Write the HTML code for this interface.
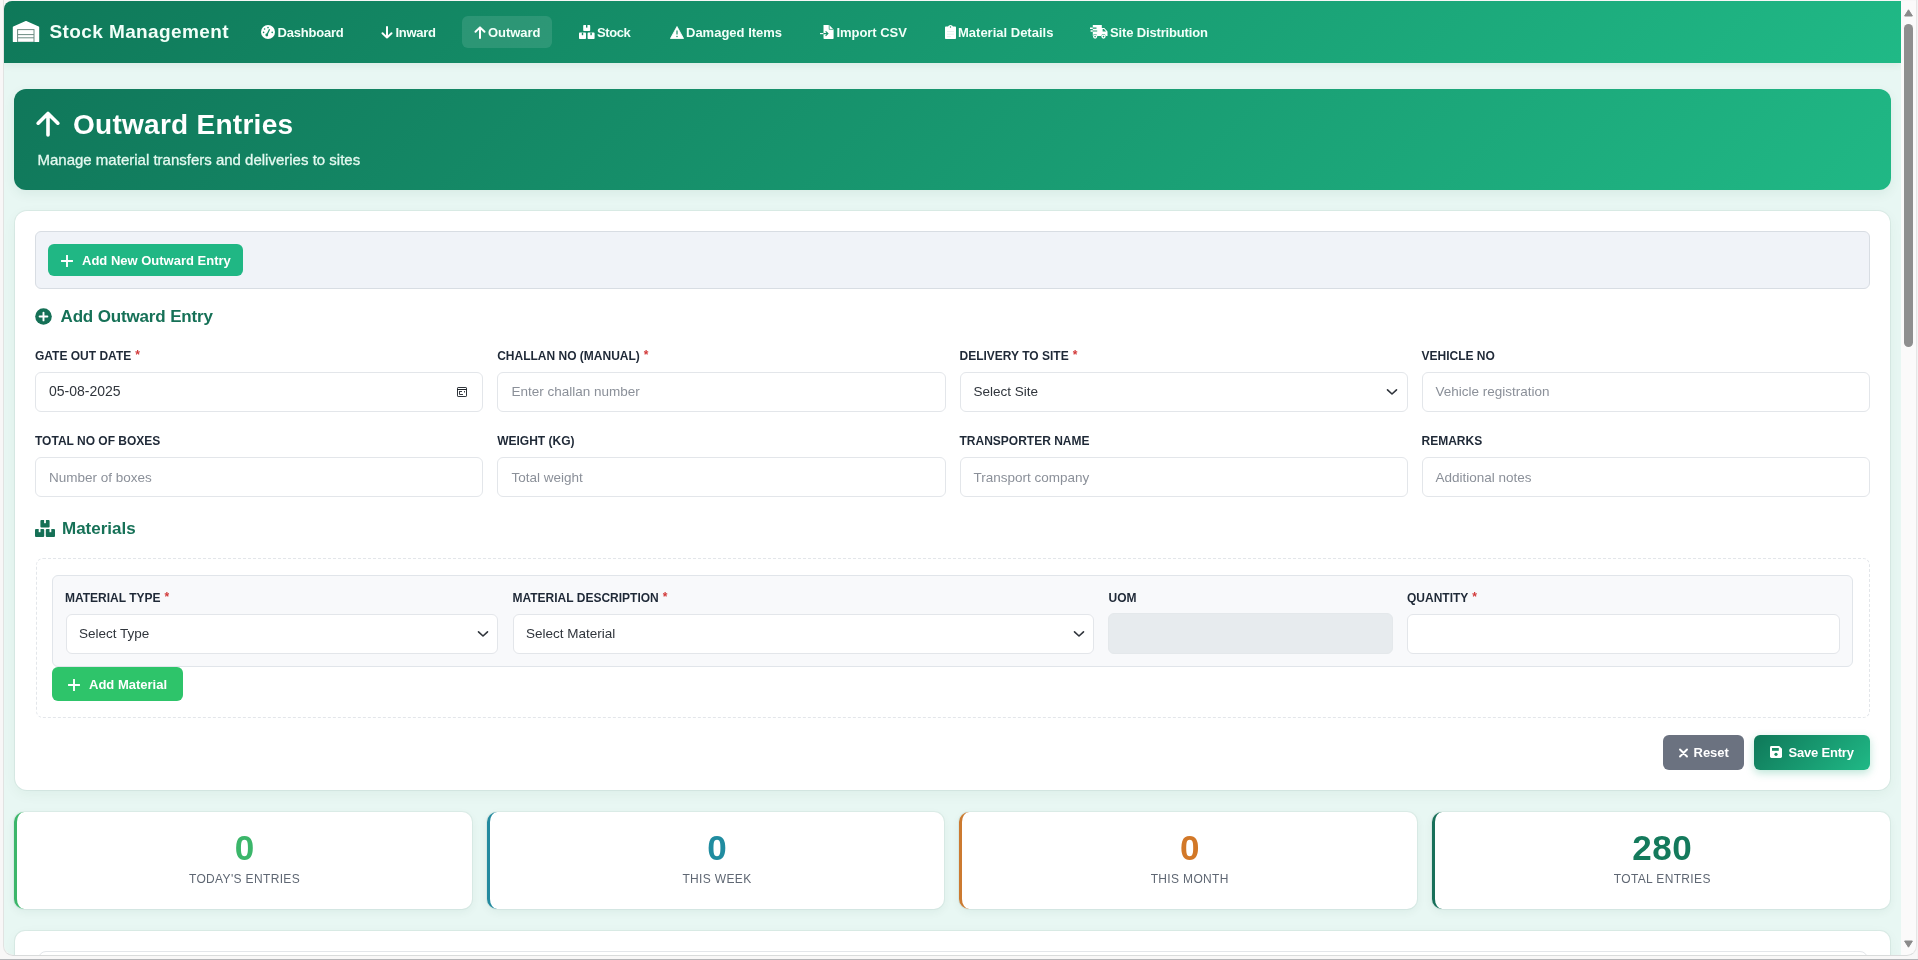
<!DOCTYPE html>
<html><head><meta charset="utf-8">
<style>
*{box-sizing:border-box;margin:0;padding:0}
html,body{width:1918px;height:960px;overflow:hidden;background:#f8f7f7;font-family:"Liberation Sans",sans-serif}
.a{position:absolute}
#botline{position:absolute;left:0;top:959px;width:1918px;height:1px;background:#b4b5b8}
#rline{position:absolute;left:1917px;top:0;width:1px;height:959px;background:#f3f3f3}
#vp{will-change:transform;position:absolute;left:0;top:0;width:1918px;height:960px;overflow:hidden;
 clip-path:inset(1px 17px 5px 4px round 8px 0 0 10px);
 background:#e8f7f3}
#sb{position:absolute;left:1901px;top:1px;width:15px;height:955px;background:#fbfafa;border-radius:0 0 8px 0}
.nav{position:absolute;left:4px;top:1px;width:1897px;height:62px;background:linear-gradient(135deg,#0f7859 0%,#20b986 100%);box-shadow:0 2px 8px rgba(0,70,45,.07)}
.nt{position:absolute;color:#f2fff9;font-weight:bold;font-size:13px;line-height:13px;white-space:nowrap}
.hdr{position:absolute;left:14px;top:89px;width:1877px;height:101px;border-radius:12px;background:linear-gradient(135deg,#10775a 0%,#20b885 100%);box-shadow:0 4px 12px rgba(0,80,50,.07)}
.card{position:absolute;background:#fff;border-radius:12px;box-shadow:0 0 0 1px rgba(20,70,55,.06),0 4px 14px rgba(0,70,45,.05)}
.lbl{position:absolute;font-size:12px;font-weight:bold;color:#1f2937;line-height:12px;white-space:nowrap}
.lbl i{font-style:normal;color:#d23a3a;margin-left:4px;font-size:12px;position:relative;top:-1px}
.inp{position:absolute;height:39.5px;border:1px solid #e3e6ea;border-radius:6px;background:#fff}
.it{position:absolute;font-size:13.5px;line-height:13.5px;color:#8b9099;white-space:nowrap}
.it.v{color:#30353c}
.chev{position:absolute;width:12px;height:8px}
.stat{position:absolute;top:811.7px;height:97px;background:#fff;border-radius:10px;box-shadow:0 0 0 1px rgba(20,70,55,.05),0 3px 10px rgba(0,70,45,.06)}
.stat:before{content:"";position:absolute;left:0;top:0;bottom:0;width:3px}
.stat .n{position:absolute;left:0;right:0;text-align:center;top:830.5px;font-size:35px;font-weight:bold;line-height:35px;letter-spacing:.5px}
.stat .t{position:absolute;left:0;right:0;text-align:center;font-size:12px;color:#5f6773;letter-spacing:.35px;line-height:12px}
</style></head><body>
<div id="vp">
  <!-- NAVBAR -->
  <div class="nav"></div>
  <svg class="a" style="left:12px;top:20px" width="28" height="23" viewBox="0 0 28 23">
    <path d="M1.6 7.2 L14 1.8 L26.4 7.2 V21.6 H1.6 Z" fill="#fff" stroke="#fff" stroke-width="1.6" stroke-linejoin="round"/>
    <rect x="5.6" y="9.6" width="16.4" height="12.6" fill="#fff" stroke="#6d8c83" stroke-width="1"/>
    <path d="M5.6 14.6 H22 M5.6 17.8 H22" stroke="#6d8c83" stroke-width="1"/>
    <path d="M0 22.5 H28" stroke="#117c5c" stroke-width="1"/>
  </svg>
  <div class="nt" style="left:49.5px;top:22.3px;font-size:19px;line-height:19px;letter-spacing:.4px">Stock Management</div>

  <svg class="a" style="left:260.5px;top:25px" width="14" height="14" viewBox="0 0 14 14">
    <circle cx="7" cy="7" r="7" fill="#fff"/>
    <circle cx="5.8" cy="10" r="1.4" fill="#168a64"/>
    <path d="M5.8 10 L8.6 4.2" stroke="#168a64" stroke-width="1.3"/>
    <circle cx="7" cy="2.6" r=".8" fill="#168a64"/><circle cx="3.6" cy="4" r=".8" fill="#168a64"/>
    <circle cx="2.6" cy="7.4" r=".8" fill="#168a64"/><circle cx="11.2" cy="7.4" r=".8" fill="#168a64"/>
  </svg>
  <div class="nt" style="left:277.5px;top:25.5px;letter-spacing:-.2px">Dashboard</div>

  <svg class="a" style="left:381px;top:25.5px" width="12" height="13" viewBox="0 0 12 13">
    <path d="M6 1 V11.5 M1.5 7.2 L6 11.6 L10.5 7.2" stroke="#fff" stroke-width="2" fill="none" stroke-linecap="round" stroke-linejoin="round"/>
  </svg>
  <div class="nt" style="left:395.5px;top:25.5px;letter-spacing:-.3px">Inward</div>

  <div class="a" style="left:462px;top:16px;width:90px;height:31.5px;border-radius:6px;background:rgba(255,255,255,.11)"></div>
  <svg class="a" style="left:474px;top:25.5px" width="12" height="13" viewBox="0 0 12 13">
    <path d="M6 12 V1.5 M1.5 5.8 L6 1.4 L10.5 5.8" stroke="#fff" stroke-width="2" fill="none" stroke-linecap="round" stroke-linejoin="round"/>
  </svg>
  <div class="nt" style="left:488px;top:25.5px;letter-spacing:-.05px">Outward</div>

  <svg class="a" style="left:578.5px;top:25px" width="16" height="14" viewBox="0 0 16 14">
    <rect x="4.2" y="0" width="7" height="6" rx=".8" fill="#fff"/>
    <rect x="0" y="7.6" width="7" height="6.4" rx=".8" fill="#fff"/>
    <rect x="8.6" y="7.6" width="7" height="6.4" rx=".8" fill="#fff"/>
    <rect x="7" y="0" width="1.4" height="2.6" fill="#168c66"/>
    <rect x="2.8" y="7.6" width="1.4" height="2.6" fill="#168c66"/>
    <rect x="11.4" y="7.6" width="1.4" height="2.6" fill="#168c66"/>
  </svg>
  <div class="nt" style="left:597px;top:25.5px;letter-spacing:-.4px">Stock</div>

  <svg class="a" style="left:669.5px;top:25.5px" width="14" height="13" viewBox="0 0 14 13">
    <path d="M7 .5 L13.6 12.5 H.4 Z" fill="#fff" stroke="#fff" stroke-width=".8" stroke-linejoin="round"/>
    <path d="M7 4.5 V8.6" stroke="#178c66" stroke-width="1.2"/><circle cx="7" cy="10.4" r=".75" fill="#178c66"/>
  </svg>
  <div class="nt" style="left:686px;top:25.5px;letter-spacing:0px">Damaged Items</div>

  <svg class="a" style="left:820px;top:25px" width="14" height="14" viewBox="0 0 14 14">
    <path d="M3.5 0 H9.2 L13.6 4.4 V13.2 Q13.6 14 12.8 14 H4.3 Q3.5 14 3.5 13.2 Z" fill="#fff"/>
    <path d="M9.2 0 V4.4 H13.6" fill="none" stroke="#179068" stroke-width=".7"/>
    <path d="M0 8.6 H7.8 M5.6 6.4 L7.9 8.6 L5.6 10.8" stroke="#179068" stroke-width="1.1" fill="none"/>
    <path d="M0 8.6 H3.4" stroke="#fff" stroke-width="1.1"/>
  </svg>
  <div class="nt" style="left:836.5px;top:25.5px;letter-spacing:-.05px">Import CSV</div>

  <svg class="a" style="left:944.5px;top:25px" width="11" height="14" viewBox="0 0 11 14">
    <path d="M0 2.4 Q0 1.6 .8 1.6 H3 Q3.6 0 5.5 0 Q7.4 0 8 1.6 H10.2 Q11 1.6 11 2.4 V13.2 Q11 14 10.2 14 H.8 Q0 14 0 13.2 Z" fill="#fff"/>
    <circle cx="5.5" cy="2" r=".7" fill="#19946a"/>
    <path d="M2 6.6 H9 M2 9.2 H9 M2 11.6 H6" stroke="#c9ece0" stroke-width=".6"/>
  </svg>
  <div class="nt" style="left:958px;top:25.5px;letter-spacing:0px">Material Details</div>

  <svg class="a" style="left:1090px;top:25px" width="18" height="14" viewBox="0 0 18 14">
    <path d="M2.8 0 H11.8 V3 H14.3 L17.5 6.6 V11 H15.6 A2.1 2.1 0 0 0 11.4 11 H7.2 A2.1 2.1 0 0 0 3 11 H2.8 Z" fill="#fff"/>
    <circle cx="5.1" cy="11.6" r="2.1" fill="#fff"/><circle cx="13.5" cy="11.6" r="2.1" fill="#fff"/>
    <circle cx="5.1" cy="11.6" r=".8" fill="#1a9c70"/><circle cx="13.5" cy="11.6" r=".8" fill="#1a9c70"/>
    <path d="M12.6 4 H14 L16 6.4 H12.6 Z" fill="#1a9c70"/>
    <path d="M.3 3.2 H6.5 M1 6 H7.2" stroke="#1a9c70" stroke-width="1.2"/>
    <path d="M0 3.2 H2.8 M.6 6 H2.8" stroke="#fff" stroke-width="1.4"/>
  </svg>
  <div class="nt" style="left:1110px;top:25.5px;letter-spacing:-.15px">Site Distribution</div>

  <!-- HEADER -->
  <div class="hdr"></div>
  <svg class="a" style="left:36px;top:111px" width="24" height="26" viewBox="0 0 24 26">
    <path d="M12 24 V3 M2.2 12.2 L12 2.4 L21.8 12.2" stroke="#fff" stroke-width="3.6" fill="none" stroke-linecap="round" stroke-linejoin="round"/>
  </svg>
  <div class="a" style="left:73px;top:110.9px;color:#fff;font-size:28px;font-weight:bold;line-height:28px;white-space:nowrap;letter-spacing:.27px">Outward Entries</div>
  <div class="a" style="left:37.5px;top:152px;color:#e4f9f0;font-size:15px;line-height:15px;white-space:nowrap;-webkit-text-stroke:.3px #e4f9f0">Manage material transfers and deliveries to sites</div>

  <!-- FORM CARD -->
  <div class="card" style="left:15px;top:211px;width:1875px;height:578.5px"></div>
  <div class="a" style="left:35px;top:231px;width:1834.5px;height:57.5px;border:1px solid #d8dde3;border-radius:6px;background:#f0f3f8"></div>
  <div class="a" style="left:48px;top:244px;width:195px;height:32px;border-radius:6px;background:#20b784"></div>
  <svg class="a" style="left:60.5px;top:254.5px" width="12" height="12" viewBox="0 0 12 12"><path d="M6 .5 V11.5 M.5 6 H11.5" stroke="#fff" stroke-width="1.9" stroke-linecap="round"/></svg>
  <div class="a" style="left:82px;top:254px;color:#fff;font-size:13px;font-weight:bold;line-height:13px;white-space:nowrap">Add New Outward Entry</div>

  <svg class="a" style="left:35px;top:308px" width="17" height="17" viewBox="0 0 17 17"><circle cx="8.5" cy="8.5" r="8.3" fill="#157056"/><path d="M8.5 4.6 V12.4 M4.6 8.5 H12.4" stroke="#fff" stroke-width="1.9" stroke-linecap="round"/></svg>
  <div class="a" style="left:60.5px;top:308.3px;color:#167157;font-size:17px;font-weight:bold;line-height:17px;white-space:nowrap;letter-spacing:-.15px">Add Outward Entry</div>

  <!-- row 1 -->
  <div class="lbl" style="left:35px;top:349.8px">GATE OUT DATE<i>*</i></div>
  <div class="lbl" style="left:497.2px;top:349.8px">CHALLAN NO (MANUAL)<i>*</i></div>
  <div class="lbl" style="left:959.5px;top:349.8px">DELIVERY TO SITE<i>*</i></div>
  <div class="lbl" style="left:1421.5px;top:349.8px">VEHICLE NO</div>
  <div class="inp" style="left:35px;top:372px;width:448.4px"></div>
  <div class="inp" style="left:497.2px;top:372px;width:448.4px"></div>
  <div class="inp" style="left:959.5px;top:372px;width:448.4px"></div>
  <div class="inp" style="left:1421.5px;top:372px;width:448px"></div>
  <div class="it v" style="left:49px;top:384px;font-size:14px;line-height:14px">05-08-2025</div>
  <svg class="a" style="left:456px;top:386px" width="12" height="12" viewBox="0 0 12 12"><rect x="1.5" y="1.5" width="9" height="9" rx=".6" fill="none" stroke="#30353b" stroke-width="1"/><path d="M1 3.5 H11" stroke="#1f2328" stroke-width="1"/><path d="M3.5 5 V8.5 H7 M3.5 5.5 H6" stroke="#3a3f45" stroke-width="1" fill="none"/><rect x="8" y="5" width="1" height="1.5" fill="#3a3f45"/></svg>
  <div class="it" style="left:511.5px;top:385px">Enter challan number</div>
  <div class="it v" style="left:973.5px;top:385px">Select Site</div>
  <svg class="chev" style="left:1385.5px;top:388px" viewBox="0 0 12 8"><path d="M1.5 1.8 L6 6 L10.5 1.8" stroke="#30353c" stroke-width="1.6" fill="none" stroke-linecap="round" stroke-linejoin="round"/></svg>
  <div class="it" style="left:1435.5px;top:385px">Vehicle registration</div>

  <!-- row 2 -->
  <div class="lbl" style="left:35px;top:434.7px">TOTAL NO OF BOXES</div>
  <div class="lbl" style="left:497.2px;top:434.7px">WEIGHT (KG)</div>
  <div class="lbl" style="left:959.5px;top:434.7px">TRANSPORTER NAME</div>
  <div class="lbl" style="left:1421.5px;top:434.7px">REMARKS</div>
  <div class="inp" style="left:35px;top:457px;width:448.4px"></div>
  <div class="inp" style="left:497.2px;top:457px;width:448.4px"></div>
  <div class="inp" style="left:959.5px;top:457px;width:448.4px"></div>
  <div class="inp" style="left:1421.5px;top:457px;width:448px"></div>
  <div class="it" style="left:49px;top:471px">Number of boxes</div>
  <div class="it" style="left:511.5px;top:471px">Total weight</div>
  <div class="it" style="left:973.5px;top:471px">Transport company</div>
  <div class="it" style="left:1435.5px;top:471px">Additional notes</div>

  <!-- Materials -->
  <svg class="a" style="left:34.5px;top:520px" width="20" height="17" viewBox="0 0 20 17">
    <rect x="5.4" y="0" width="9.2" height="7.4" rx="1" fill="#157056"/>
    <rect x="0" y="9" width="9.2" height="8" rx="1" fill="#157056"/>
    <rect x="10.8" y="9" width="9.2" height="8" rx="1" fill="#157056"/>
    <rect x="9.1" y="0" width="1.8" height="3.2" fill="#fff"/>
    <rect x="3.7" y="9" width="1.8" height="3.2" fill="#fff"/>
    <rect x="14.5" y="9" width="1.8" height="3.2" fill="#fff"/>
  </svg>
  <div class="a" style="left:62px;top:520.3px;color:#167157;font-size:17px;font-weight:bold;line-height:17px;white-space:nowrap">Materials</div>

  <div class="a" style="left:35.5px;top:558.2px;width:1834px;height:159.6px;border:1px dashed #e3e6ea;border-radius:7px"></div>
  <div class="a" style="left:52.3px;top:575px;width:1801px;height:91.8px;border:1px solid #e1e5ea;border-radius:6px;background:#f8f9fb"></div>
  <div class="lbl" style="left:65px;top:592px">MATERIAL TYPE<i>*</i></div>
  <div class="lbl" style="left:512.5px;top:592px">MATERIAL DESCRIPTION<i>*</i></div>
  <div class="lbl" style="left:1108.5px;top:592px">UOM</div>
  <div class="lbl" style="left:1407px;top:592px">QUANTITY<i>*</i></div>
  <div class="inp" style="left:65.5px;top:613.5px;width:432.6px;height:40px"></div>
  <div class="inp" style="left:512.7px;top:613.5px;width:581.3px;height:40px"></div>
  <div class="inp" style="left:1108.2px;top:613px;width:285.2px;height:41px;background:#e7ebee;border-color:#e4e8eb"></div>
  <div class="inp" style="left:1406.9px;top:613.5px;width:432.8px;height:40px"></div>
  <div class="it v" style="left:79px;top:626.9px">Select Type</div>
  <svg class="chev" style="left:476.5px;top:629.5px" viewBox="0 0 12 8"><path d="M1.5 1.8 L6 6 L10.5 1.8" stroke="#30353c" stroke-width="1.6" fill="none" stroke-linecap="round" stroke-linejoin="round"/></svg>
  <div class="it v" style="left:526px;top:626.9px">Select Material</div>
  <svg class="chev" style="left:1072.5px;top:629.5px" viewBox="0 0 12 8"><path d="M1.5 1.8 L6 6 L10.5 1.8" stroke="#30353c" stroke-width="1.6" fill="none" stroke-linecap="round" stroke-linejoin="round"/></svg>

  <div class="a" style="left:52.4px;top:667.2px;width:130.2px;height:34.1px;border-radius:6px;background:#2ec46a"></div>
  <svg class="a" style="left:67.5px;top:678.5px" width="12" height="12" viewBox="0 0 12 12"><path d="M6 .5 V11.5 M.5 6 H11.5" stroke="#fff" stroke-width="1.9" stroke-linecap="round"/></svg>
  <div class="a" style="left:89px;top:677.6px;color:#fff;font-size:13px;font-weight:bold;line-height:13px;white-space:nowrap">Add Material</div>

  <!-- action buttons -->
  <div class="a" style="left:1663px;top:735.2px;width:81px;height:34.5px;border-radius:6px;background:#6b7280"></div>
  <svg class="a" style="left:1678.5px;top:747.5px" width="9" height="10" viewBox="0 0 9 10"><path d="M1 1.5 L8 8.5 M8 1.5 L1 8.5" stroke="#fff" stroke-width="1.9" stroke-linecap="round"/></svg>
  <div class="a" style="left:1693.5px;top:746.1px;color:#fff;font-size:13px;font-weight:bold;line-height:13px;white-space:nowrap">Reset</div>
  <div class="a" style="left:1754px;top:735.2px;width:116px;height:34.5px;border-radius:6px;background:linear-gradient(135deg,#0f7859 0%,#20b986 100%);box-shadow:0 3px 9px rgba(16,160,110,.28)"></div>
  <svg class="a" style="left:1770px;top:746px" width="12" height="12" viewBox="0 0 12 12"><path d="M0 1.4 Q0 0 1.4 0 H9.2 L12 2.8 V10.6 Q12 12 10.6 12 H1.4 Q0 12 0 10.6 Z" fill="#fff"/><rect x="2" y="2" width="6.8" height="2.8" fill="#158a62"/><circle cx="6" cy="8.3" r="1.6" fill="#158a62"/></svg>
  <div class="a" style="left:1788.5px;top:746.1px;color:#fff;font-size:13px;font-weight:bold;line-height:13px;white-space:nowrap;letter-spacing:-.2px">Save Entry</div>

  <!-- STATS -->
  <div class="stat" style="left:14.3px;width:457.6px;border-left:3px solid #3bb66a"></div>
  <div class="stat" style="left:486.6px;width:457.6px;border-left:3px solid #238a9f"></div>
  <div class="stat" style="left:959.3px;width:458px;border-left:3px solid #cc7a30"></div>
  <div class="stat" style="left:1432.2px;width:457.8px;border-left:3px solid #18705a"></div>
  <div class="a" style="left:17px;width:455px;top:829.6px;text-align:center;font-size:35px;font-weight:bold;line-height:35px;color:#3bb66a">0</div>
  <div class="a" style="left:489.5px;width:455px;top:829.6px;text-align:center;font-size:35px;font-weight:bold;line-height:35px;color:#208ca0">0</div>
  <div class="a" style="left:962px;width:455.5px;top:829.6px;text-align:center;font-size:35px;font-weight:bold;line-height:35px;color:#d27828">0</div>
  <div class="a" style="left:1434.5px;width:455.5px;top:829.6px;text-align:center;font-size:35px;font-weight:bold;line-height:35px;color:#147a5c;letter-spacing:.6px">280</div>
  <div class="a" style="left:17px;width:455px;top:872.6px;text-align:center;font-size:12px;line-height:12px;color:#5f6773;letter-spacing:.35px">TODAY'S ENTRIES</div>
  <div class="a" style="left:489.5px;width:455px;top:872.6px;text-align:center;font-size:12px;line-height:12px;color:#5f6773;letter-spacing:.35px">THIS WEEK</div>
  <div class="a" style="left:962px;width:455.5px;top:872.6px;text-align:center;font-size:12px;line-height:12px;color:#5f6773;letter-spacing:.35px">THIS MONTH</div>
  <div class="a" style="left:1434.5px;width:455.5px;top:872.6px;text-align:center;font-size:12px;line-height:12px;color:#5f6773;letter-spacing:.35px">TOTAL ENTRIES</div>

  <!-- bottom card -->
  <div class="card" style="left:15px;top:931px;width:1875px;height:100px;border-radius:10px"></div>
  <div class="a" style="left:38px;top:951px;width:1830px;height:40px;border:1px solid #e3e6ea;border-radius:8px 8px 0 0"></div>
</div>
<div id="sb">
  <svg class="a" style="left:3px;top:8px" width="9" height="8" viewBox="0 0 9 8"><path d="M4.5 .8 L8.4 7 H.6 Z" fill="#8a8a8a" stroke="#8a8a8a" stroke-width="1" stroke-linejoin="round"/></svg>
  <div class="a" style="left:3px;top:23px;width:9px;height:323px;border-radius:4.5px;background:#8f8f8f"></div>
  <svg class="a" style="left:3px;top:939px" width="9" height="8" viewBox="0 0 9 8"><path d="M.6 1 H8.4 L4.5 7.2 Z" fill="#8a8a8a" stroke="#8a8a8a" stroke-width="1" stroke-linejoin="round"/></svg>
</div>
<div id="rline"></div>
<div class="a" style="left:3px;top:0px;width:1914px;height:956px;border-left:1px solid #e1e3e2;border-right:1px solid #e6e6e6;border-bottom:1px solid #d9dbdb;border-radius:0 0 10px 10px"></div>
<div id="botline"></div>
</body></html>
